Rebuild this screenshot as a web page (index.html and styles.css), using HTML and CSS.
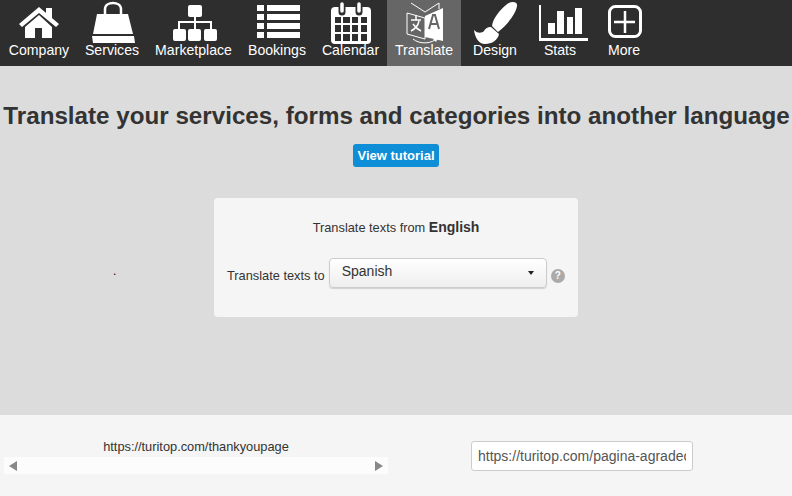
FILE: index.html
```html
<!DOCTYPE html>
<html lang="en">
<head>
    <meta charset="UTF-8">
    <meta name="viewport" content="width=device-width, initial-scale=1.0">
    <title>Translate</title>
    <link rel="stylesheet" href="styles.css">
</head>
<body>
    <nav class="topbar">
        <a class="nav-item company">
            <svg class="nav-icon" width="76" height="42" viewBox="1 0 76 42">
                <path d="M46 8h6v12l-6-5z" fill="#fff"/>
                <path d="M39 7 19 24l3 3 17-14 17 14 3-3z" fill="#fff"/>
                <path d="M39 15 25 27v11h10V28h7v10h10V27z" fill="#fff"/>
            </svg>
            <span>Company</span>
        </a>
        <a class="nav-item services">
            <svg class="nav-icon" width="70" height="42" viewBox="77 0 70 42">
                <path d="M105 15V9c0-8 16-8 16 0v6" fill="none" stroke="#fff" stroke-width="2.500"/>
                <path d="M97 14h31l5 20H93zM92 36h42l1 7H93z" fill="#fff"/>
            </svg>
            <span>Services</span>
        </a>
        <a class="nav-item marketplace">
            <svg class="nav-icon" width="93" height="42" viewBox="147 0 93 42">
                <rect x="188" y="5" width="14" height="12" rx="2" fill="#fff"/>
                <path d="M195 16v14M179 30v-8h32v8" fill="none" stroke="#fff" stroke-width="2"/>
                <rect x="173" y="29" width="13" height="12" rx="2" fill="#fff"/>
                <rect x="188" y="29" width="13" height="12" rx="2" fill="#fff"/>
                <rect x="204" y="29" width="13" height="12" rx="2" fill="#fff"/>
            </svg>
            <span>Marketplace</span>
        </a>
        <a class="nav-item bookings">
            <svg class="nav-icon" width="74" height="42" viewBox="240 0 74 42">
                <path d="M257 5h7v6h-7zM267 5h33v6h-33zM257 14h7v6h-7zM267 14h33v6h-33zM257 23h7v6h-7zM267 23h33v6h-33zM257 32h7v6h-7zM267 32h33v6h-33z" fill="#fff"/>
            </svg>
            <span>Bookings</span>
        </a>
        <a class="nav-item calendar">
            <svg class="nav-icon" width="73" height="42" viewBox="314 0 73 42">
                <rect x="331" y="7" width="40" height="37" rx="4" fill="#fff"/>
                <path d="M335 17h6v6h-6zM343 17h7v6h-7zM352 17h6v6h-6zM361 17h6v6h-6zM335 25h6v7h-6zM343 25h7v7h-7zM352 25h6v7h-6zM361 25h6v7h-6zM335 34h6v7h-6zM343 34h7v7h-7zM352 34h6v7h-6zM361 34h6v7h-6z" fill="#2e2e2e"/>
                <path d="M342 4v8M359 4v8" stroke="#2e2e2e" stroke-width="7" stroke-linecap="round"/>
                <path d="M342 4v7M359 4v7" stroke="#fff" stroke-width="3.500" stroke-linecap="round"/>
            </svg>
            <span>Calendar</span>
        </a>
        <a class="nav-item translate active">
            <svg class="nav-icon" width="74" height="42" viewBox="387 0 74 42">
                <path d="M407 13l18 5v21l-18-5z" fill="none" stroke="#fff"/>
                <path d="M411 3l14 9 14-9v6" fill="none" stroke="#fff"/>
                <path d="M425 16l18-8v33l-18-4z" fill="#fff"/>
                <path d="M411 20h10M416 15v5M419 21c-1 5-4 8-8 10M413 24c2 3 4 5 8 7" fill="none" stroke="#fff" stroke-width="1.500"/>
                <path d="M429 29l4-14h2l4 14M431 24h6" fill="none" stroke="#666" stroke-width="2"/>
                <path d="M413 39c6 5 16 5 22 1" fill="none" stroke="#fff"/>
                <path d="M438 38l-2 4-3-3z" fill="#fff"/>
            </svg>
            <span>Translate</span>
        </a>
        <a class="nav-item design">
            <svg class="nav-icon" width="68" height="42" viewBox="461 0 68 42">
                <path d="M506 5c4-4 12-4 11 1-1 8-11 20-19 26l-6-6c1-8 8-16 14-21z" fill="#fff"/>
                <path d="M491 27l8 7c-1 6-7 10-14 10-6 0-10-6-11-14 4 4 8 3 10 1 1-2 3-4 7-4z" fill="#fff"/>
            </svg>
            <span>Design</span>
        </a>
        <a class="nav-item stats">
            <svg class="nav-icon" width="62" height="42" viewBox="529 0 62 42">
                <path d="M539 5h2v33h47v3h-49z" fill="#fff"/>
                <path d="M548 23h7v11h-7zM557 11h7v23h-7zM567 17h6v17h-6zM575 8h7v26h-7z" fill="#fff"/>
            </svg>
            <span>Stats</span>
        </a>
        <a class="nav-item more">
            <svg class="nav-icon" width="66" height="42" viewBox="591 0 66 42">
                <rect x="609.500" y="6.500" width="31" height="30" rx="6" fill="none" stroke="#fff" stroke-width="3"/>
                <path d="M625 11v22M614 22h21" stroke="#fff" stroke-width="2.500"/>
            </svg>
            <span>More</span>
        </a>
    </nav>

    <main class="main-panel">
        <h1>Translate your services, forms and categories into another language</h1>
        <button class="tutorial-btn">View tutorial</button>
        <div class="translate-row">
            <div class="dot-col">.</div>
            <div class="translate-card">
                <p class="from-line">Translate texts from <strong>English</strong></p>
                <div class="to-line">
                    <label>Translate texts to</label>
                    <button class="lang-select">
                        <span>Spanish</span>
                        <i class="caret"></i>
                    </button>
                    <span class="help-icon">?</span>
                </div>
            </div>
        </div>
    </main>

    <section class="url-row">
        <div class="url-source">
            <div class="url-text">https://turitop.com/thankyoupage</div>
            <div class="scroll-track">
                <i class="arrow-left"></i>
                <i class="arrow-right"></i>
            </div>
        </div>
        <div class="url-target">
            <input class="url-input" type="text" value="https://turitop.com/pagina-agradecimiento">
        </div>
    </section>
</body>
</html>
```

FILE: styles.css
```css
* {
    box-sizing: border-box;
}
html, body {
    height: 100%;
}
body {
    margin: 0;
    height: 496px;
    overflow: hidden;
    display: flex;
    flex-direction: column;
    font-family: "Liberation Sans", Arial, sans-serif;
    color: #333;
    background-color: #f5f5f5;
}
.topbar {
    display: flex;
    height: 66px;
    padding-left: 1px;
    background-color: #2e2e2e;
}
.nav-item {
    display: flex;
    flex-direction: column;
    align-items: center;
    color: #fff;
    font-size: 14.1px;
    line-height: 17px;
}
.nav-item.company { width: 76px; }
.nav-item.services { width: 70px; }
.nav-item.marketplace { width: 93px; }
.nav-item.bookings { width: 74px; }
.nav-item.calendar { width: 73px; }
.nav-item.translate { width: 74px; }
.nav-item.design { width: 68px; }
.nav-item.stats { width: 62px; }
.nav-item.more { width: 66px; }
.nav-item.active {
    background-color: #666;
}
.nav-icon {
    display: block;
    flex: none;
    height: 42px;
    overflow: visible;
}
.main-panel {
    height: 349px;
    padding-top: 35px;
    display: flex;
    flex-direction: column;
    align-items: center;
    background-color: #dcdcdc;
}
h1 {
    margin: 0 0 0 1px;
    white-space: nowrap;
    font-size: 24.2px;
    line-height: 30px;
    font-weight: bold;
}
.tutorial-btn {
    margin-top: 13px;
    width: 86px;
    height: 23px;
    padding: 0;
    border: none;
    border-radius: 3px;
    background-color: #0d8ed6;
    color: #fff;
    font-family: inherit;
    font-size: 13px;
    font-weight: bold;
}
.translate-row {
    width: 100%;
    margin-top: 31px;
    display: flex;
}
.dot-col {
    width: 214px;
    padding: 66px 0 0 113px;
    font-size: 12px;
    line-height: 14px;
    color: #000;
}
.translate-card {
    width: 364px;
    height: 119px;
    padding-top: 20px;
    border-radius: 4px;
    background-color: #f5f5f5;
}
.from-line {
    margin: 0;
    text-align: center;
    font-size: 12.8px;
    line-height: 18px;
}
.from-line strong {
    font-size: 14px;
}
.to-line {
    margin-top: 21px;
    padding-left: 13px;
    display: flex;
    align-items: center;
    font-size: 12.8px;
}
.to-line label {
    margin-top: 4px;
}
.lang-select {
    width: 218px;
    height: 30px;
    margin-left: 4px;
    padding: 0 12px;
    display: flex;
    align-items: center;
    justify-content: space-between;
    border: 1px solid #ccc;
    border-radius: 4px;
    background: linear-gradient(#fff, #eee);
    box-shadow: 0 1px 1px rgba(0,0,0,0.15);
    color: #333;
    font-family: inherit;
    font-size: 14px;
}
.lang-select span {
    margin-bottom: 4px;
}
.caret {
    width: 0;
    height: 0;
    border-top: 4px solid #222;
    border-left: 3px solid transparent;
    border-right: 3px solid transparent;
}
.help-icon {
    width: 14px;
    height: 14px;
    margin: 6px 0 0 4px;
    border-radius: 50%;
    background-color: #aaa;
    color: #fff;
    font-size: 10px;
    font-weight: bold;
    line-height: 14px;
    text-align: center;
}
.url-row {
    flex: 1;
    display: flex;
    background-color: #f5f5f5;
}
.url-source {
    width: 392px;
    padding: 24px 4px 0;
}
.url-text {
    text-align: center;
    font-size: 12.8px;
    line-height: 16px;
}
.scroll-track {
    height: 17px;
    margin-top: 2px;
    padding: 0 5px;
    display: flex;
    align-items: center;
    justify-content: space-between;
    background-color: #fcfcfc;
}
.arrow-left, .arrow-right {
    width: 0;
    height: 0;
    border-top: 5px solid transparent;
    border-bottom: 5px solid transparent;
}
.arrow-left {
    border-right: 8px solid #888;
}
.arrow-right {
    border-left: 8px solid #888;
}
.url-target {
    padding: 26px 0 0 79px;
}
.url-input {
    width: 222px;
    height: 30px;
    padding: 0 6px;
    border: 1px solid #ccc;
    border-radius: 3px;
    background-color: #fff;
    color: #555;
    font-family: inherit;
    font-size: 14px;
    outline: none;
}
```
